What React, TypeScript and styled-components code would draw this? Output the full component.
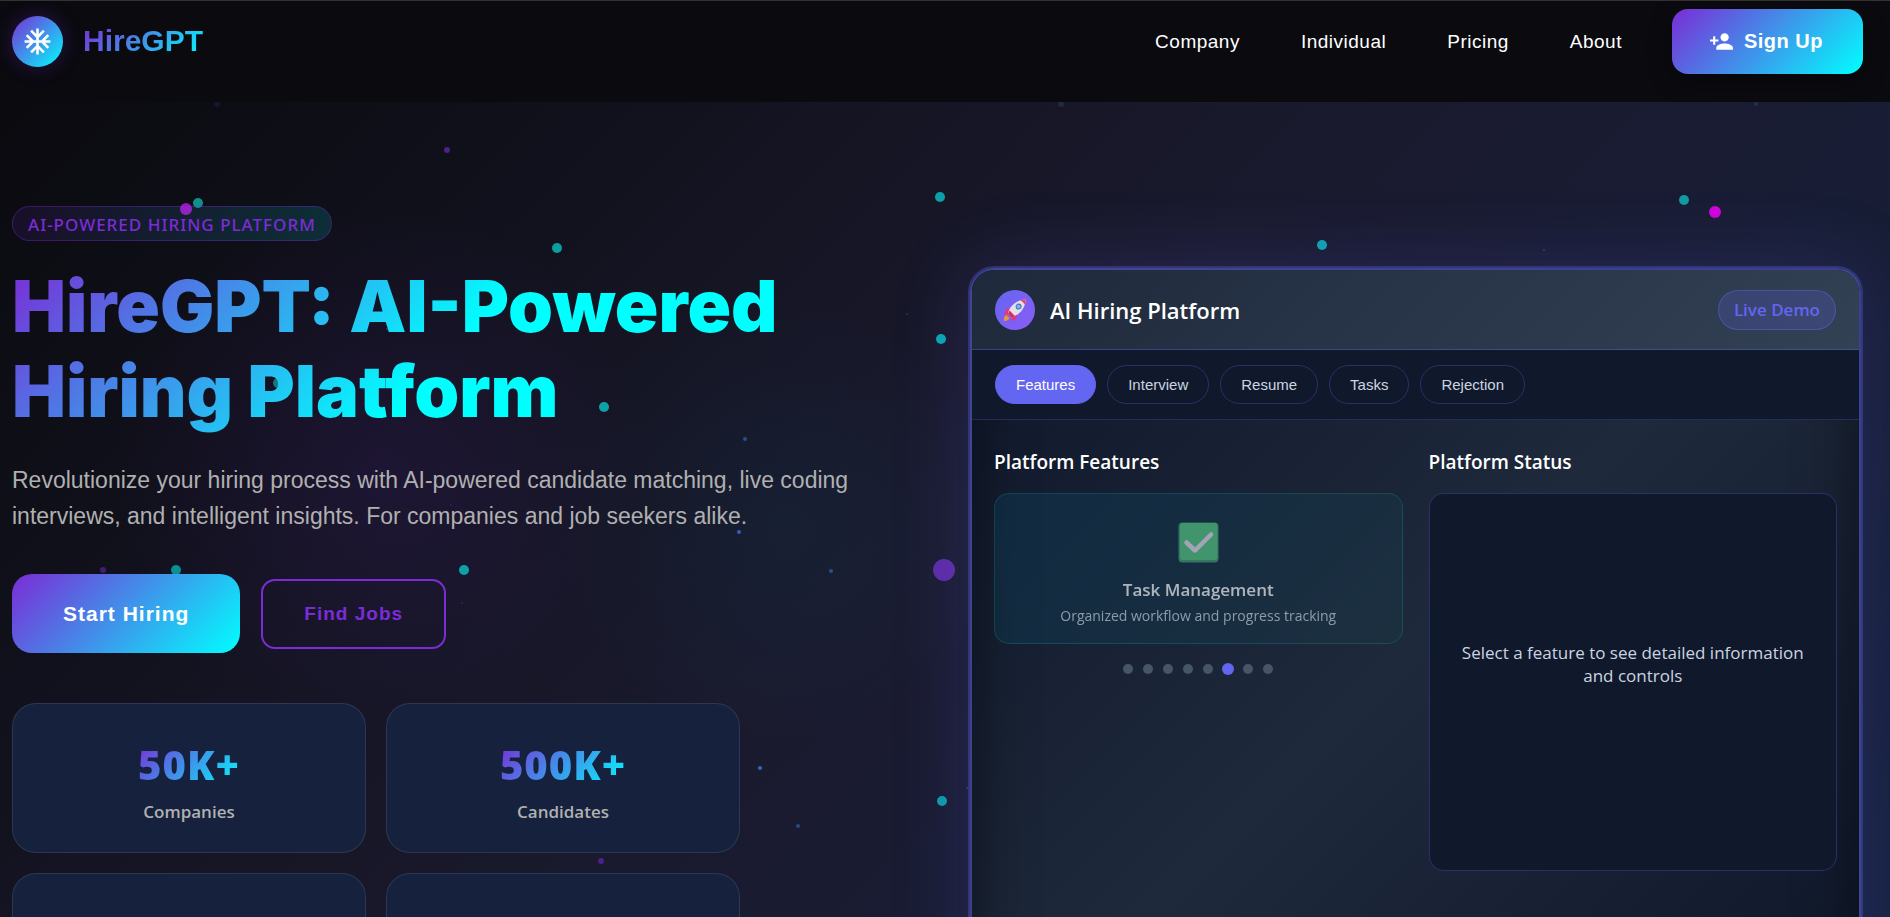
import React from 'react';
import styled, { createGlobalStyle } from 'styled-components';
import { MdAcUnit, MdPersonAdd } from 'react-icons/md';

const violet = '#7b2cd6';
const brand = `linear-gradient(135deg, ${violet} 0%, #00ffff 100%)`;
const arial = `"Liberation Sans", Arial, sans-serif`;
const segoe = `"Open Sans", "Noto Sans", sans-serif`;

const GlobalStyle = createGlobalStyle`
  *, *::before, *::after { box-sizing: border-box; }
  body { margin: 0; background: #0a0a0f; color: #fff; font-family: ${segoe}; }
  h1, h2, h3, p { margin: 0; }
  button { font: inherit; cursor: pointer; }
`;

const Page = styled.div`
  display: flex;
  flex-direction: column;
  height: 100vh;
  overflow: hidden;
`;

const Header = styled.header`
  display: flex;
  align-items: center;
  justify-content: space-between;
  padding: 8px 27px 28px 12px;
  border-top: 1px solid #333;
  background: #0a0a0f;
  font-family: ${arial};
`;

const Brand = styled.a`
  display: flex;
  align-items: center;
  gap: 20px;
  text-decoration: none;
`;

const BrandMark = styled.span`
  display: grid;
  place-items: center;
  width: 51px;
  height: 51px;
  border-radius: 50%;
  background: ${brand};
  box-shadow: 0 0 20px rgba(123, 44, 214, 0.3);
  color: #fff;
`;

const BrandName = styled.span`
  padding-bottom: 2px;
  font-size: 30px;
  font-weight: 700;
  line-height: 36px;
  background: ${brand};
  background-clip: text;
  -webkit-background-clip: text;
  color: transparent;
`;

const Nav = styled.nav`
  display: flex;
  align-items: center;
  gap: 61px;
`;

const NavLink = styled.a`
  color: #fff;
  font-size: 19px;
  line-height: 24px;
  letter-spacing: 0.5px;
  text-decoration: none;
`;

const SignUp = styled.button`
  display: flex;
  align-items: center;
  justify-content: center;
  gap: 10px;
  height: 65px;
  margin-left: -11px;
  padding: 0 40px 0 37px;
  border: 0;
  border-radius: 16px;
  background: ${brand};
  box-shadow: 0 8px 24px rgba(0, 0, 0, 0.3);
  color: #fff;
  font-size: 20px;
  font-weight: 700;
  letter-spacing: 0.5px;
`;

const Hero = styled.main`
  position: relative;
  flex: 1;
  display: grid;
  grid-template-columns: 1fr 1fr;
  align-items: start;
  gap: 67px;
  min-height: 0;
  padding: 0 29px 0 12px;
  background:
    radial-gradient(circle 380px at 380px 370px, rgba(123, 44, 214, 0.1), transparent 70%),
    radial-gradient(circle 320px at 780px 420px, rgba(0, 160, 200, 0.05), transparent 70%),
    linear-gradient(135deg, #0a0a0f 0%, #1a1a2e 50%, #16213e 100%);
`;

const Particles = styled.svg`
  position: absolute;
  inset: 0;
  width: 100%;
  height: 100%;
  pointer-events: none;
`;

const Intro = styled.section`
  position: relative;
  display: flex;
  flex-direction: column;
  align-items: flex-start;
  padding-top: 104px;
`;

const Eyebrow = styled.span`
  height: 35px;
  padding: 0 15px;
  border: 1px solid rgba(123, 44, 214, 0.35);
  border-radius: 18px;
  background: linear-gradient(90deg, rgba(123, 44, 214, 0.12), rgba(0, 255, 255, 0.13));
  color: ${violet};
  font-family: "Noto Sans", sans-serif;
  font-size: 17px;
  font-weight: 500;
  line-height: 35px;
  letter-spacing: 1px;
`;

const Title = styled.h1`
  width: 100%;
  margin-top: 22px;
  font-family: Inter, "Arial Black", sans-serif;
  font-size: 72px;
  font-weight: 900;
  line-height: 85px;
  background: linear-gradient(135deg, ${violet} 0%, #00ffff 50%, #00ffff 100%);
  background-clip: text;
  -webkit-background-clip: text;
  color: transparent;
`;

const Lead = styled.p`
  margin-top: 29px;
  color: #b0b0b0;
  font-family: ${arial};
  font-size: 23px;
  line-height: 36px;
`;

const Actions = styled.div`
  display: flex;
  align-items: center;
  gap: 21px;
  margin-top: 40px;
`;

const Action = styled.button<{ $outlined?: boolean }>`
  height: ${p => (p.$outlined ? 70 : 79)}px;
  padding: 0 ${p => (p.$outlined ? 41 : 51)}px;
  border: ${p => (p.$outlined ? `2px solid ${violet}` : '0')};
  border-radius: ${p => (p.$outlined ? 14 : 20)}px;
  background: ${p => (p.$outlined ? 'transparent' : brand)};
  color: ${p => (p.$outlined ? violet : '#fff')};
  font-family: ${arial};
  font-size: ${p => (p.$outlined ? 19 : 21)}px;
  font-weight: 700;
  letter-spacing: 1px;
`;

const Stats = styled.div`
  display: grid;
  grid-template-columns: 1fr 1fr;
  gap: 20px;
  width: 100%;
  max-width: 728px;
  margin-top: 50px;
`;

const StatCard = styled.div`
  display: flex;
  flex-direction: column;
  align-items: center;
  min-height: 150px;
  padding-top: 36px;
  border: 1px solid rgba(255, 255, 255, 0.1);
  border-radius: 24px;
  background: #16213e;
`;

const StatValue = styled.strong`
  font-family: "Noto Sans", sans-serif;
  font-size: 40px;
  font-weight: 900;
  line-height: 50px;
  letter-spacing: 1px;
  background: ${brand};
  background-clip: text;
  -webkit-background-clip: text;
  color: transparent;
`;

const StatLabel = styled.span`
  margin-top: 10px;
  color: #b0b0b0;
  font-size: 17px;
  font-weight: 600;
  line-height: 24px;
`;

const Panel = styled.section`
  position: relative;
  min-height: 760px;
  margin-top: 166px;
  border: 2px solid rgba(99, 102, 241, 0.5);
  border-radius: 24px;
  overflow: hidden;
  background: linear-gradient(135deg, #0f172a 0%, #1e293b 50%, #0f172a 100%);
  box-shadow:
    0 0 0 2px rgba(99, 102, 241, 0.3),
    0 0 80px rgba(99, 102, 241, 0.2),
    inset 0 0 60px rgba(0, 0, 0, 0.5);
`;

const PanelHead = styled.header`
  display: flex;
  align-items: center;
  gap: 15px;
  height: 80px;
  padding: 0 23px;
  border-bottom: 1px solid rgba(99, 102, 241, 0.4);
  background: linear-gradient(135deg, #1e293b, #334155);
`;

const RocketBadge = styled.span`
  display: grid;
  place-items: center;
  width: 40px;
  height: 40px;
  border-radius: 50%;
  background: linear-gradient(135deg, #6366f1, #8b5cf6);
`;

const PanelTitle = styled.h2`
  flex: 1;
  font-size: 22px;
  font-weight: 600;
  line-height: 28px;
`;

const LiveTag = styled.span`
  padding: 0 15px;
  border: 1px solid rgba(99, 102, 241, 0.4);
  border-radius: 20px;
  background: rgba(99, 102, 241, 0.2);
  color: #6366f1;
  font-size: 17px;
  font-weight: 600;
  line-height: 38px;
`;

const Tabs = styled.div`
  display: flex;
  gap: 11px;
  padding: 15px 23px;
  border-bottom: 1px solid rgba(99, 102, 241, 0.25);
  background: #10182b;
`;

const Tab = styled.button<{ $active?: boolean }>`
  height: 39px;
  padding: 0 20px;
  border: 1px solid ${p => (p.$active ? '#6366f1' : 'rgba(99, 102, 241, 0.3)')};
  border-radius: 20px;
  background: ${p => (p.$active ? '#6366f1' : 'transparent')};
  color: ${p => (p.$active ? '#fff' : '#cbd5e1')};
  font-family: ${arial};
  font-size: 15px;
`;

const PanelBody = styled.div`
  display: grid;
  grid-template-columns: 1fr 1fr;
  gap: 26px;
  padding: 28px 22px;
`;

const SectionTitle = styled.h3`
  margin-bottom: 17px;
  font-size: 19px;
  font-weight: 600;
  line-height: 28px;
`;

const FeatureCard = styled.article`
  height: 151px;
  border: 1px solid rgba(20, 184, 166, 0.22);
  border-radius: 15px;
  background: linear-gradient(135deg, rgba(6, 120, 160, 0.16), rgba(16, 120, 120, 0.09));
  text-align: center;
`;

const FeatureContent = styled.div`
  display: flex;
  flex-direction: column;
  align-items: center;
  padding-top: 28px;
  opacity: 0.65;
`;

const FeatureName = styled.strong`
  margin-top: 14px;
  font-size: 17px;
  font-weight: 600;
  line-height: 26px;
`;

const FeatureText = styled.p`
  color: #cbd5e1;
  font-size: 14px;
  line-height: 26px;
`;

const Dots = styled.div`
  display: flex;
  justify-content: center;
  gap: 10px;
  padding-top: 20px;
`;

const Dot = styled.button<{ $active?: boolean }>`
  width: 10px;
  height: 10px;
  padding: 0;
  border: 0;
  border-radius: 50%;
  background: ${p => (p.$active ? '#6366f1' : '#475569')};
  box-shadow: ${p => (p.$active ? '0 0 0 1px #6366f1' : 'none')};
`;

const StatusCard = styled.div`
  display: flex;
  align-items: center;
  justify-content: center;
  height: 378px;
  padding: 0 30px 36px;
  border: 1px solid rgba(99, 102, 241, 0.3);
  border-radius: 15px;
  background: #10182b;
  color: #cbd5e1;
  font-size: 17px;
  line-height: 23px;
  text-align: center;
`;

const particles: Array<[number, number, number, string]> = [
  [447, 48, 3, '#4d2185'], [186, 107, 6, '#a012bc'], [198, 101, 5, '#0f8f8b'],
  [557, 146, 5, '#0c9d9f'], [604, 305, 5, '#0ca3a8'], [278, 281, 5, '#12797c'],
  [745, 337, 2, '#274d8c'], [739, 430, 2, '#2b62bd'], [831, 469, 2, '#2a4f94'],
  [907, 212, 1, '#2a3568'], [940, 95, 5, '#0d9fa8'], [941, 237, 5, '#0aa7b2'],
  [1322, 143, 5, '#10a3b0'], [1684, 98, 5, '#109ba4'], [1715, 110, 6, '#cf04db'],
  [1544, 148, 1, '#4a2890'], [944, 468, 11, '#5e2ca5'], [942, 699, 5, '#0f9aa8'],
  [760, 666, 2, '#3565bd'], [798, 724, 2, '#28488a'], [601, 759, 3, '#4d2185'],
  [103, 468, 3, '#421c70'], [176, 468, 5, '#0a8f92'], [464, 468, 5, '#0ca3a8'],
  [462, 501, 1, '#3d1d68'], [451, 403, 1, '#3d1d68'], [387, 227, 1, '#27407c'],
  [217, 2, 3, '#11192b'], [1061, 2, 3, '#1f2a3c'], [1756, 2, 2, '#1e3350'],
  [967, 686, 1, '#4a2f90'],
];

function Rocket() {
  return (
    <svg width="24" height="24" viewBox="0 0 24 24" aria-hidden="true">
      <path d="M1 23c-.4-3 .2-5 2.200-6l3.400 3.100c-1 2-3 3-5.600 2.900z" fill="#f59332" />
      <path d="M9 9.800 3.600 11 1 17l5.600-1.500zM14 15l-.6 5.200L9 23.600l-.6-6z" fill="#f4316b" />
      <path d="M4.800 16.200C6 9 12.500 2 22.800 1.200 22.200 11.500 15 17.800 8 19.400z" fill="#e6dfe9" />
      <path d="M17.200 2.500c1.700-.7 3.600-1.200 5.600-1.300-.1 2.100-.5 3.900-1.200 5.500-1-2-2.400-3.500-4.400-4.200z" fill="#f4405f" />
      <path d="M5 16.200c.4-1.400.9-2.600 1.500-3.700l5.300 5.500c-1.200.7-2.500 1.200-3.800 1.500z" fill="#c92f63" />
      <circle cx="15.600" cy="8.600" r="3" fill="#4579c4" />
      <circle cx="15.600" cy="8.600" r="1.900" fill="#78b7ee" />
    </svg>
  );
}

function CheckMark() {
  return (
    <svg width="41" height="41" viewBox="0 0 41 41" aria-hidden="true">
      <rect x="0.500" y="0.500" width="40" height="40" rx="4" fill="#479c74" />
      <rect x="2" y="1" width="37.500" height="37" rx="3" fill="#57cd86" />
      <path d="M8.500 20.500l8.500 8L33 12.500" fill="none" stroke="#f0e4f4" strokeWidth="4.500" strokeLinecap="round" strokeLinejoin="round" />
    </svg>
  );
}

const navItems = ['Company', 'Individual', 'Pricing', 'About'];
const tabs = ['Features', 'Interview', 'Resume', 'Tasks', 'Rejection'];
const stats = [
  { value: '50K+', label: 'Companies' },
  { value: '500K+', label: 'Candidates' },
];

export default function App() {
  return (
    <Page>
      <GlobalStyle />
      <Header>
        <Brand href="#">
          <BrandMark><MdAcUnit size={31} /></BrandMark>
          <BrandName>HireGPT</BrandName>
        </Brand>
        <Nav>
          {navItems.map(item => <NavLink key={item} href="#">{item}</NavLink>)}
          <SignUp type="button"><MdPersonAdd size={25} />Sign Up</SignUp>
        </Nav>
      </Header>
      <Hero>
        <Particles aria-hidden="true">
          {particles.map(([x, y, r, fill]) => <circle key={`${x}-${y}`} cx={x} cy={y} r={r} fill={fill} />)}
        </Particles>
        <Intro>
          <Eyebrow>AI-POWERED HIRING PLATFORM</Eyebrow>
          <Title>HireGPT: AI-Powered<br />Hiring Platform</Title>
          <Lead>
            Revolutionize your hiring process with AI-powered candidate matching, live coding<br />
            interviews, and intelligent insights. For companies and job seekers alike.
          </Lead>
          <Actions>
            <Action type="button">Start Hiring</Action>
            <Action type="button" $outlined>Find Jobs</Action>
          </Actions>
          <Stats>
            {stats.map(s => (
              <StatCard key={s.label}>
                <StatValue>{s.value}</StatValue>
                <StatLabel>{s.label}</StatLabel>
              </StatCard>
            ))}
            <StatCard />
            <StatCard />
          </Stats>
        </Intro>
        <Panel>
          <PanelHead>
            <RocketBadge><Rocket /></RocketBadge>
            <PanelTitle>AI Hiring Platform</PanelTitle>
            <LiveTag>Live Demo</LiveTag>
          </PanelHead>
          <Tabs>
            {tabs.map((t, i) => <Tab key={t} type="button" $active={i === 0}>{t}</Tab>)}
          </Tabs>
          <PanelBody>
            <div>
              <SectionTitle>Platform Features</SectionTitle>
              <FeatureCard>
                <FeatureContent>
                  <CheckMark />
                  <FeatureName>Task Management</FeatureName>
                  <FeatureText>Organized workflow and progress tracking</FeatureText>
                </FeatureContent>
              </FeatureCard>
              <Dots>
                {Array.from({ length: 8 }, (_, i) => <Dot key={i} type="button" $active={i === 5} />)}
              </Dots>
            </div>
            <div>
              <SectionTitle>Platform Status</SectionTitle>
              <StatusCard>Select a feature to see detailed information and controls</StatusCard>
            </div>
          </PanelBody>
        </Panel>
      </Hero>
    </Page>
  );
}
